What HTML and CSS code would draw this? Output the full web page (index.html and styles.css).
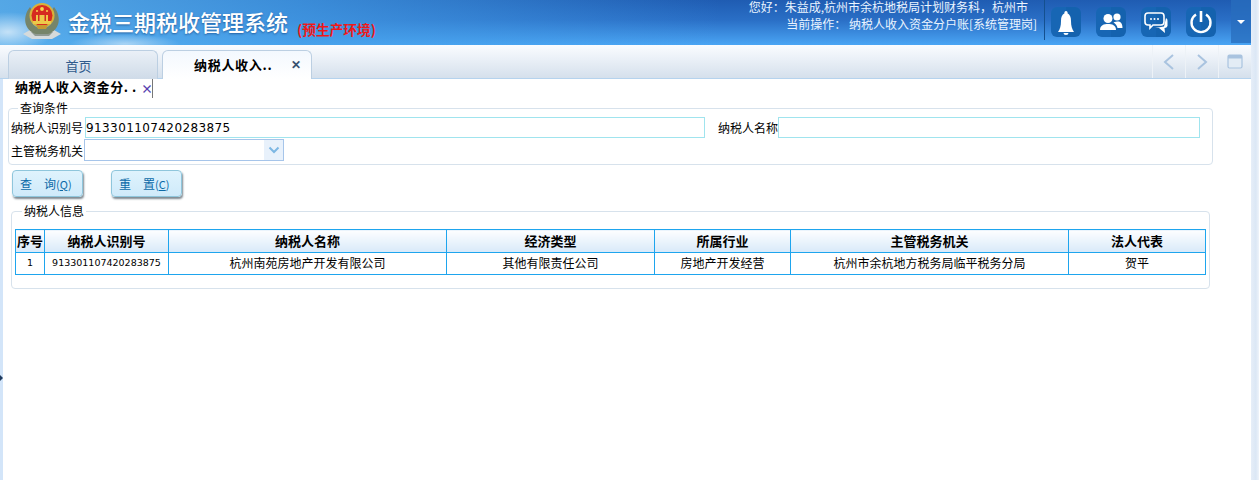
FILE: index.html
```html
<!DOCTYPE html>
<html lang="zh-CN">
<head>
<meta charset="utf-8">
<title>金税三期税收管理系统</title>
<link rel="stylesheet" href="styles.css">
</head>
<body>
<div class="app">
  <div class="main">
    <header class="header">
      <svg class="emblem" width="40" height="42" viewBox="0 0 40 42">
        <path d="M1 33 L8 29 L32 29 L39 33 L30 38 L10 38Z" fill="#d5dadb"/>
        <path d="M9 31 L31 31 L27 35 L13 35Z" fill="#8f9a92"/>
        <path d="M8 6 C0 16 2 29 14 33 L26 33 C38 29 40 16 32 6 L30 9 C34 18 30 26 20 28 C10 26 6 18 10 9Z" fill="#76856a"/>
        <circle cx="20" cy="14.5" r="12.5" fill="#d9b23a"/>
        <circle cx="20" cy="14.5" r="10.5" fill="#d62b20"/>
        <path d="M11 20 h18 v3 h-18z M14 14 h12 v6 h-12z" fill="#edc94a"/>
        <path d="M16 14 h8 v6 h-8z" fill="#d62b20"/>
        <path d="M17.5 14 h5 v6 h-5z" fill="#edc94a"/>
        <circle cx="20" cy="8" r="1.9" fill="#f5d64e"/>
        <circle cx="15" cy="10" r="1" fill="#f5d64e"/>
        <circle cx="25" cy="10" r="1" fill="#f5d64e"/>
        <path d="M14 24 L26 24 L24 28 L16 28Z" fill="#c79a32"/>
      </svg>
      <h1 class="title">金税三期税收管理系统</h1>
      <span class="env">(预生产环境)</span>
      <div class="user">
        <div class="user-line1">您好：朱益成,杭州市余杭地税局计划财务科，杭州市</div>
        <div class="user-line2">当前操作： 纳税人收入资金分户账[系统管理岗]</div>
      </div>
      <div class="tools">
        <span class="tool"><svg viewBox="0 0 30 30" width="30" height="30"><path d="M15 4 a1.6 1.6 0 0 1 1.5 2.2 C19 7.5 20 10 20 14 C20 19 21 22 23 25 H7 C9 22 10 19 10 14 C10 10 11 7.5 13.5 6.2 A1.6 1.6 0 0 1 15 4Z M12.5 26 h5 a2.5 2 0 0 1 -5 0Z" fill="#fff"/></svg></span>
        <span class="tool"><svg viewBox="0 0 30 30" width="30" height="30"><circle cx="12" cy="11.5" r="4.5" fill="#fff"/><circle cx="21" cy="10" r="3.6" fill="#fff"/><path d="M4 23 C4 18 8 17 12 17 C16 17 20 18 20 23Z" fill="#fff"/><path d="M17.5 15.5 C19 14.5 21 14.5 22 14.5 C25 14.5 26.5 17 26.5 21 H21.5 C21 18.5 19.5 16.5 17.5 15.5Z" fill="#fff"/></svg></span>
        <span class="tool"><svg viewBox="0 0 30 30" width="30" height="30"><path d="M7 6 H20 a3 3 0 0 1 3 3 V15 a3 3 0 0 1 -3 3 H12 L9 21 V18 H7 a3 3 0 0 1 -3 -3 V9 a3 3 0 0 1 3 -3Z" fill="none" stroke="#fff" stroke-width="1.6"/><circle cx="10" cy="12" r="1" fill="#fff"/><circle cx="13.5" cy="12" r="1" fill="#fff"/><circle cx="17" cy="12" r="1" fill="#fff"/><path d="M25 11 a3 3 0 0 1 1.5 3 V19 a3 3 0 0 1 -3 2 L24 26 L18 21 H14 L23 19.5Z" fill="#fff"/></svg></span>
        <span class="tool"><svg viewBox="0 0 30 30" width="30" height="30"><path d="M10 7.5 A9.5 9.5 0 1 0 20 7.5" fill="none" stroke="#fff" stroke-width="2.4"/><path d="M15 4 V15" stroke="#fff" stroke-width="2.6"/></svg></span>
      </div>
      <div class="more"><span class="caret"></span></div>
    </header>

    <nav class="tabbar">
      <div class="tab tab-home">首页</div>
      <div class="tab tab-active"><span class="tab-name">纳税人收入..</span><span class="tab-close">✕</span></div>
      <div class="tab-tools">
        <span class="tab-tool"><svg width="14" height="18" viewBox="0 0 14 18"><path d="M11 2 L3 9 L11 16" fill="none" stroke="#a9c3df" stroke-width="2"/></svg></span>
        <span class="tab-tool"><svg width="14" height="18" viewBox="0 0 14 18"><path d="M3 2 L11 9 L3 16" fill="none" stroke="#a9c3df" stroke-width="2"/></svg></span>
        <span class="tab-tool"><svg width="16" height="16" viewBox="0 0 16 16"><rect x="1" y="1" width="14" height="13" rx="1.5" fill="#e3ecf5" stroke="#a9c3df" stroke-width="1.2"/><rect x="1" y="1" width="14" height="3.5" fill="#a9c3df"/></svg></span>
      </div>
    </nav>

    <div class="content">
      <div class="subtabs">
        <div class="subtab"><span class="subtab-name">纳税人收入资金分<span class="dots">..</span></span><span class="subtab-close">×</span></div>
      </div>

      <fieldset class="box box-query">
        <legend>查询条件</legend>
        <div class="form-row">
          <label class="lbl">纳税人识别号</label>
          <input class="field field-id" type="text" value="913301107420283875">
          <label class="lbl lbl-name">纳税人名称</label>
          <input class="field field-name" type="text">
        </div>
        <div class="form-row form-row-2">
          <label class="lbl">主管税务机关</label>
          <div class="combo"><span class="combo-btn"><svg width="12" height="8" viewBox="0 0 12 8"><path d="M1.5 1.5 L6 6 L10.5 1.5" fill="none" stroke="#7db7e3" stroke-width="2"/></svg></span></div>
        </div>
      </fieldset>

      <div class="actions">
        <button class="btn" type="button"><span class="btn-main">查　询</span><span class="btn-key">(<u>Q</u>)</span></button>
        <button class="btn" type="button"><span class="btn-main">重　置</span><span class="btn-key">(<u>C</u>)</span></button>
      </div>

      <fieldset class="box box-info">
        <legend>纳税人信息</legend>
        <table class="grid">
          <colgroup>
            <col class="c1"><col class="c2"><col class="c3"><col class="c4"><col class="c5"><col class="c6"><col class="c7">
          </colgroup>
          <thead>
            <tr><th>序号</th><th>纳税人识别号</th><th>纳税人名称</th><th>经济类型</th><th>所属行业</th><th>主管税务机关</th><th>法人代表</th></tr>
          </thead>
          <tbody>
            <tr><td class="small">1</td><td class="small">913301107420283875</td><td>杭州南苑房地产开发有限公司</td><td>其他有限责任公司</td><td>房地产开发经营</td><td>杭州市余杭地方税务局临平税务分局</td><td>贺平</td></tr>
          </tbody>
        </table>
      </fieldset>
      <span class="edge-mark"></span>
    </div>
  </div>
  <div class="rail"></div>
</div>
</body>
</html>
```
FILE: styles.css
```css
* { box-sizing: border-box; }
html, body { margin: 0; padding: 0; height: 100%; overflow: hidden; }
body { font-family: "Noto Sans CJK SC", "Liberation Sans", sans-serif; font-size: 12px; color: #000; background: #fff; }

.app { display: flex; width: 1259px; height: 480px; }
.main { width: 1251px; display: flex; flex-direction: column; }
.rail { width: 8px; background: linear-gradient(90deg, #e6eef8 0, #dbe7f5 60%, #eef3fa 100%); }

/* header */
.header {
  height: 45px; display: flex; align-items: flex-start; position: relative; color: #fff;
  background:
    radial-gradient(ellipse 45px 20px at 8px 32px, rgba(255,255,255,.65), rgba(255,255,255,0)),
    radial-gradient(ellipse 55px 10px at 125px 44px, rgba(255,255,255,.5), rgba(255,255,255,0)),
    linear-gradient(90deg, rgba(90,175,235,.9) 0, rgba(70,160,232,.7) 300px, rgba(50,130,215,0) 720px),
    linear-gradient(180deg, #1f5cb2 0, #2a6fc6 45%, #4aa5f4 100%);
}
.emblem { margin: 1px 0 0 22px; flex: none; }
.title { margin: 6px 0 0 6px; font-size: 22px; line-height: 30px; font-weight: 500; white-space: nowrap; text-shadow: 0 1px 2px rgba(0,40,100,.5); }
.env { margin: 19px 0 0 9px; color: #f01818; font-size: 13.7px; line-height: 20px; font-weight: 700; white-space: nowrap; }
.user { margin-left: auto; width: 420px; text-align: right; font-size: 12px; line-height: 17px; color: #eaf4ff; margin-top: -2px; white-space: nowrap; }
.user-line1 { padding-right: 9px; }
.tools { display: flex; gap: 15px; height: 40px; margin-left: 7px; padding: 7px 0 0 6px; border-left: 1px solid #14508f; }
.tool { width: 30px; height: 30px; background: linear-gradient(90deg, #1766b4 0, #1766b4 50%, #1462ae 50%, #1462ae 100%); border-radius: 6px; display: block; }
.tool svg { display: block; }
.more { width: 20px; height: 43px; margin-left: 15px; background: rgba(40,110,190,.75); display: flex; align-items: center; justify-content: center; }
.caret { width: 0; height: 0; border-left: 4px solid transparent; border-right: 4px solid transparent; border-top: 4px solid #fff; }

/* tabs */
.tabbar { height: 34px; display: flex; align-items: flex-end; padding-left: 8px; gap: 4px; background: linear-gradient(180deg, #fafcff 0, #d5e0ec 100%); border-bottom: 1px solid #b5d3ee; }
.tab { width: 150px; height: 29px; margin-bottom: -1px; border: 1px solid #bccfe2; border-bottom: 0; border-radius: 6px 6px 0 0; background: linear-gradient(180deg, #eaf0f7 0, #cfdbe8 100%); color: #2f5a8c; font-size: 13px; line-height: 30px; text-align: center; }
.tab-home { padding-right: 9px; }
.tab-active { display: flex; background: linear-gradient(180deg, #f3f8fe 0, #fff 100%); color: #000; font-weight: 700; font-size: 13px; line-height: 28px; text-align: left; white-space: nowrap; }
.tab-name { flex: 1; padding-left: 31px; letter-spacing: .7px; }
.tab-close { width: 20px; color: #36516f; font-size: 12px; font-weight: 700; line-height: 26px; text-align: left; }
.tab-tools { margin-left: auto; display: flex; height: 33px; }
.tab-tool { width: 33px; display: flex; align-items: center; justify-content: center; border-left: 1px solid #edf2f7; }

/* content */
.content { flex: 1; position: relative; background: #fff; border-left: 3px solid #d3e5f9; }
.subtabs { height: 19px; padding-left: 12px; display: flex; }
.subtab { display: flex; width: 138px; height: 19px; border-right: 1px solid #777; line-height: 16px; font-weight: 700; font-size: 13px; letter-spacing: .6px; white-space: nowrap; }
.subtab-name { flex: 1; }
.dots { letter-spacing: 4px; }
.subtab-close { color: #5a3fb0; width: 10px; font-size: 12px; margin-right: 1px; line-height: 19px; }

.box { margin: 0; padding: 0; border: 1px solid #d7e2ec; border-radius: 4px; }
.box legend { padding: 0 2px; font-size: 12px; line-height: 14px; }
.box-query { width: 1205px; height: 64px; margin: 3px 0 0 5px; padding: 2px 0 0 2px; }
.box-query legend { margin-left: 7px; }
.form-row { display: flex; align-items: center; height: 21px; }
.form-row-2 { margin-top: 1px; height: 22px; }
.lbl { width: 73px; flex: none; white-space: nowrap; font-size: 12px; line-height: 21px; }
.lbl-name { width: 60px; margin-left: 13px; }
.field { height: 21px; border: 1px solid #a0e4ee; padding: 0; font-family: "DejaVu Sans", sans-serif; font-size: 12px; letter-spacing: .4px; outline: 0; color: #000; background: #fff; }
.field-id { width: 620px; margin-left: 1px; }
.field-name { width: 422px; }
.combo { width: 200px; height: 22px; border: 1px solid #a6c5ea; display: flex; justify-content: flex-end; }
.combo-btn { width: 19px; background: #e8f1fb; display: flex; align-items: center; justify-content: center; }

.actions { display: flex; gap: 28px; margin: 5px 0 0 9px; }
.btn { width: 71px; height: 27px; padding: 0 0 0 7px; text-align: left; border: 1px solid #8fc6dc; border-radius: 4px; background: linear-gradient(180deg, #dff3fd 0, #cfeafa 100%); box-shadow: 1px 2px 2px #7f8a92; color: #0b6aa8; font-family: inherit; font-size: 12px; white-space: nowrap; }
.btn-key { font-size: 11px; }

.box-info { width: 1199px; height: 85px; margin: 7px 0 0 8px; padding: 11px 0 0 3px; }
.box-info legend { margin-left: 7px; }
.grid { width: 1190px; table-layout: fixed; border-collapse: collapse; border: 1px solid #1ea5ee; }
.c1 { width: 29px; } .c2 { width: 124px; } .c3 { width: 278px; } .c4 { width: 208px; } .c5 { width: 136px; } .c6 { width: 278px; } .c7 { width: 137px; }
.grid th, .grid td { border: 1px solid #1ea5ee; text-align: center; padding: 0; white-space: nowrap; overflow: hidden; }
.grid th { height: 23px; padding-bottom: 1px; font-size: 13px; font-weight: 700; background: linear-gradient(180deg, #fdfeff 0, #d8e9f9 100%); }
.grid td { height: 22px; padding-bottom: 2px; font-size: 12px; }
.grid td.small { font-family: "DejaVu Sans", sans-serif; font-size: 9.5px; }

.edge-mark { position: absolute; left: -3px; top: 296px; width: 0; height: 0; border-top: 3px solid transparent; border-bottom: 3px solid transparent; border-left: 3px solid #1e3a5f; }
```
